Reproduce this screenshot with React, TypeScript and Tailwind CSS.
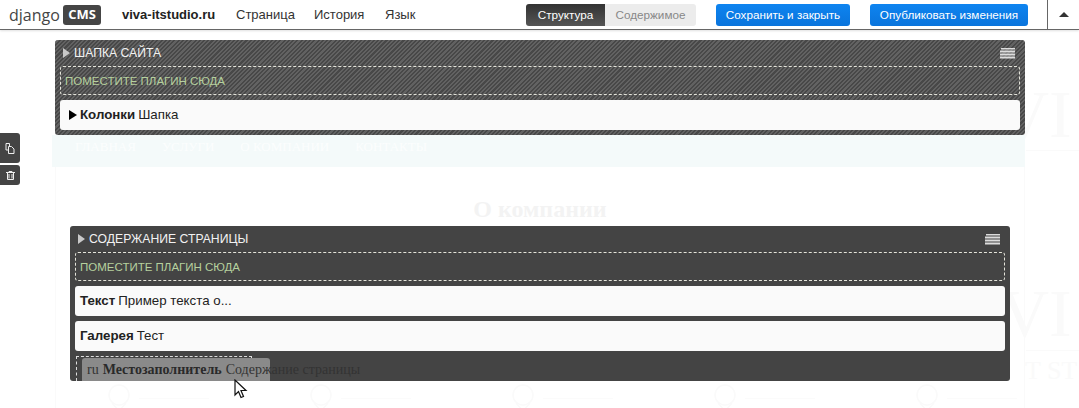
const sans = "font-['Liberation_Sans',Arial,sans-serif]";
const serif = "font-['Liberation_Serif','Times_New_Roman',serif]";

function Burger() {
  return (
    <svg width="15" height="11" viewBox="0 0 15 11" className="shrink-0">
      <path d="M1 .5h14M0 3.5h15M0 6.5h15M0 9.5h15" stroke="#dcdcdc" strokeWidth="2" />
    </svg>
  );
}

function Drop() {
  return (
    <div className="mx-[5px] h-[29px] border border-dashed border-[#e4e4da] rounded-[3px] flex items-center pl-[4px] pt-[2px] text-[11.5px] text-[#b6d19e]">
      ПОМЕСТИТЕ ПЛАГИН СЮДА
    </div>
  );
}

function Row({ bold, rest, arrow }: { bold: string; rest: string; arrow?: boolean }) {
  return (
    <div className="mx-[5px] h-[30px] bg-[#fafafa] rounded-[3px] flex items-center pl-[5px] text-[13.3px] text-[#222]">
      {arrow && <span className="w-0 h-0 mx-[4px] mr-[3px] border-y-[5px] border-y-transparent border-l-[8px] border-l-black" />}
      <b>{bold}</b>
      <span className="ml-[3px]">{rest}</span>
    </div>
  );
}

function PanelHead({ title }: { title: string }) {
  return (
    <div className="h-[26px] flex items-center pl-[8px] pr-[10px] text-[12.2px] text-[#f2f2f2]">
      <span className="w-0 h-0 mr-[4px] border-y-[5px] border-y-transparent border-l-[7px] border-l-[#c9c9c9]" />
      <span className="flex-1">{title}</span>
      <Burger />
    </div>
  );
}

function FaintItem() {
  return (
    <div className="flex items-center gap-2">
      <svg width="24" height="30" viewBox="0 0 24 30" fill="none" stroke="#fafafa" strokeWidth="1.5">
        <circle cx="12" cy="12" r="10" />
        <path d="M5 20l7 8 7-8" />
      </svg>
      <div className="w-[70px] h-px bg-[#fbfbfb]" />
    </div>
  );
}

export default function App() {
  return (
    <div className={`relative h-[408px] w-[1079px] overflow-hidden bg-white ${sans}`}>
      <header className="relative z-20 h-[30px] bg-white border-b border-[#666] shadow-[0_1px_2px_rgba(0,0,0,0.12)] flex items-center pl-[9px] whitespace-nowrap">
        <span className="w-[50px] font-['Open_Sans',sans-serif] text-[16px] text-[#454545] leading-none">django</span>
        <span className="ml-[4px] w-[38px] h-[20px] rounded-[3px] bg-[#454545] text-white font-['Open_Sans',sans-serif] font-bold text-[13px] flex items-center justify-center">CMS</span>
        <b className="ml-[21px] w-[93px] text-[13px] text-[#222]">viva-itstudio.ru</b>
        <span className="ml-[21px] w-[59px] text-[13px] text-[#333]">Страница</span>
        <span className="ml-[19px] w-[50px] text-[13px] text-[#333]">История</span>
        <span className="ml-[21px] w-[31px] text-[13px] text-[#333]">Язык</span>
        <div className="ml-[110px] flex h-[22px] text-[11.7px]">
          <div className="w-[79px] rounded-l-[3px] bg-gradient-to-b from-[#333] to-[#555] text-white flex items-center justify-center">Структура</div>
          <div className="w-[91px] rounded-r-[3px] bg-[#ececec] text-[#888] flex items-center justify-center">Содержимое</div>
        </div>
        <div className="ml-[20px] w-[134px] h-[22px] rounded-[3px] bg-gradient-to-b from-[#0e84f0] to-[#0a74dc] text-white text-[11.7px] flex items-center justify-center">Сохранить и закрыть</div>
        <div className="ml-[20px] w-[158px] h-[22px] rounded-[3px] bg-gradient-to-b from-[#0e84f0] to-[#0a74dc] text-white text-[11.7px] flex items-center justify-center">Опубликовать изменения</div>
        <div className="ml-[19px] h-[29px] w-[32px] border-l border-[#666] flex items-center justify-center">
          <span className="w-0 h-0 border-x-[5px] border-x-transparent border-b-[5px] border-b-[#333]" />
        </div>
      </header>

      {/* faint page behind the structure board */}
      <div className={`absolute left-[1000px] top-[80px] text-[68px] leading-none text-[#fafafa] ${serif}`}>VI</div>
      <div className="absolute left-[1026px] top-[150px] w-[53px] h-px bg-[#fafafa]" />
      <div className={`absolute left-[1000px] top-[279px] text-[68px] leading-none text-[#fafafa] ${serif}`}>VI</div>
      <div className="absolute left-[1026px] top-[350px] w-[53px] h-px bg-[#fafafa]" />
      <div className={`absolute left-[1025px] top-[358px] text-[26px] leading-none text-[#fafafa] ${serif}`}>T ST</div>

      <main className="relative ml-[55px] w-[970px] pt-[10px]">
        <section className="relative z-10 h-[95px] rounded-[3px] bg-[repeating-linear-gradient(135deg,#484848_0,#484848_1.5px,#626262_1.5px,#626262_3px)]">
          <PanelHead title="ШАПКА САЙТА" />
          <Drop />
          <div className="h-[5px]" />
          <Row bold="Колонки" rest="Шапка" arrow />
        </section>

        <nav className={`-ml-[3px] h-[32px] bg-[#f4fafa] flex items-start pt-[2px] pl-[23px] gap-[26px] text-[13px] text-[#fcfefe] ${serif}`}>
          <span>ГЛАВНАЯ</span>
          <span>УСЛУГИ</span>
          <span>О КОМПАНИИ</span>
          <span>КОНТАКТЫ</span>
        </nav>

        <div className="h-[241px] border-x border-[#fafafa]">
          <h1 className={`pt-[28px] h-[59px] text-center font-bold text-[24px] leading-[28px] text-[#f3f3f3] ${serif}`}>О компании</h1>
          <section className="ml-[14px] w-[940px] h-[155px] rounded-[3px] bg-[#444]">
            <PanelHead title="СОДЕРЖАНИЕ СТРАНИЦЫ" />
            <Drop />
            <div className="h-[5px]" />
            <Row bold="Текст" rest="Пример текста о..." />
            <div className="h-[5px]" />
            <Row bold="Галерея" rest="Тест" />
            <div className="mt-[5px] ml-[6px] w-[176px] h-[25px] border border-dashed border-[#ddd] border-b-0" />
          </section>
          <div className="flex gap-[100px] pl-[51px] pt-[2px]">
            <FaintItem />
            <FaintItem />
            <FaintItem />
            <FaintItem />
            <FaintItem />
          </div>
        </div>
      </main>

      {/* left side actions */}
      <div className="absolute left-0 top-[133px] flex flex-col gap-[2px]">
        <button className="w-[20px] h-[30px] rounded-r-[3px] bg-[#444] flex items-center justify-center">
          <svg width="10" height="11" viewBox="0 0 10 11" fill="none" stroke="#eee" strokeWidth="1">
            <path d="M1 .5h3.500v2.500M1 .5v6.500h2M3.500 3.500h3l2.500 2.500v4.500h-5.500z" />
          </svg>
        </button>
        <button className="w-[20px] h-[20px] rounded-r-[3px] bg-[#444] flex items-center justify-center">
          <svg width="9" height="9" viewBox="0 0 9 9" fill="none" stroke="#eee" strokeWidth="1">
            <path d="M0 1.500h9M1.500 1.500v7h6v-7M3 3v4.500M6 3v4.500M3 1.500v-1h3v1" />
          </svg>
        </button>
      </div>

      {/* dragged placeholder */}
      <div className={`absolute left-[82px] top-[358px] w-[188px] h-[23px] rounded-t-[3px] bg-[#8a8a8a] flex items-center pl-[5px] text-[14px] text-[#333] whitespace-nowrap ${serif}`}>
        ru <b className="ml-1 text-[#2a2a2a]">Местозаполнитель</b>
        <span className="ml-1">Содержание страницы</span>
      </div>
      <svg className="absolute left-[234px] top-[379px]" width="14" height="20" viewBox="0 0 14 20">
        <path d="M1 1v15l3.500-3.500 2.500 6 2.500-1-2.500-6h5z" fill="#fff" stroke="#111" strokeWidth="1.200" />
      </svg>
    </div>
  );
}
